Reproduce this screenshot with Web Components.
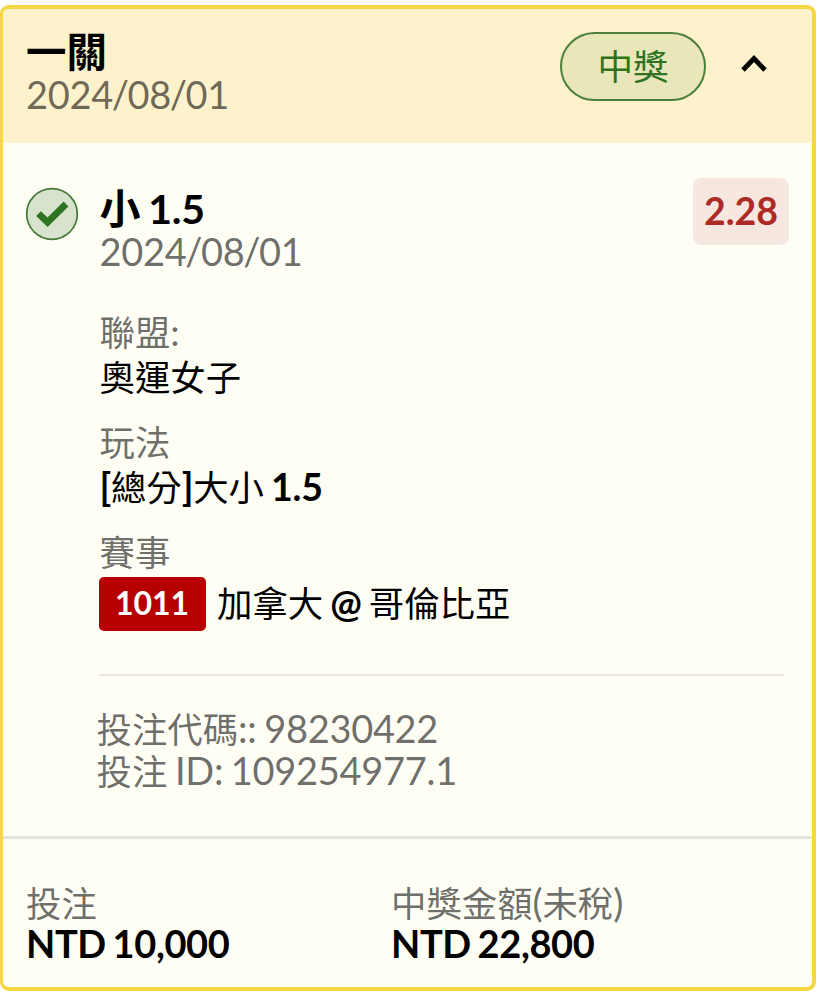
<!DOCTYPE html>
<html lang="zh-Hant">
<head>
<meta charset="utf-8">
<title>投注</title>
<style>
    body {
        margin: 0;
        padding-top: 5px;
        background: #fff;
        font-family: Lato, "Noto Sans CJK TC", sans-serif;
        color: #000;
    }
</style>
</head>
<body>
<bet-card>
    <bet-header slot="header" date="2024/08/01" status="中獎">一關</bet-header>
    <bet-selection date="2024/08/01" odds="2.28">
        <mixed-text slot="title">小 1.5</mixed-text>
        <bet-field label="聯盟:"><mixed-text>奧運女子</mixed-text></bet-field>
        <bet-field label="玩法"><mixed-text strong>[總分]大小 1.5</mixed-text></bet-field>
        <bet-field label="賽事"><match-code>1011</match-code><mixed-text strong>加拿大 @ 哥倫比亞</mixed-text></bet-field>
        <mixed-text slot="meta">投注代碼:: 98230422</mixed-text>
        <mixed-text slot="meta">投注 ID: 109254977.1</mixed-text>
    </bet-selection>
    <bet-amount slot="footer" label="投注">NTD 10,000</bet-amount>
    <bet-amount slot="footer" label="中獎金額(未稅)">NTD 22,800</bet-amount>
</bet-card>

<script>
const MUTED = 'rgba(0, 0, 0, 0.59)';

// Sets Chinese runs a little smaller than the Latin text around them
class MixedText extends HTMLElement {
    constructor() {
        super();
        this.attachShadow({ mode: 'open' });
    }

    connectedCallback() {
        const style = `
            :host { display: block; white-space: pre; word-spacing: -0.045em; }
            .cjk { font-size: var(--cjk-size, 35.4px); line-height: 0; }
            .latin, .slash { letter-spacing: -0.3px; }
            .slash { margin: 0 -1.2px; }
            :host([strong]) .latin { font-weight: 700; }
        `;
        this.shadowRoot.innerHTML = `<style>${style}</style>`;
        const runs = this.textContent.match(/[\u3400-\u9fff]+|\/|[^\u3400-\u9fff/]+/g) || [];
        runs.forEach(run => {
            const span = document.createElement('span');
            span.className = /[\u3400-\u9fff]/.test(run) ? 'cjk' : run === '/' ? 'slash' : 'latin';
            span.textContent = run;
            this.shadowRoot.appendChild(span);
        });
    }
}

class BetCard extends HTMLElement {
    constructor() {
        super();
        this.attachShadow({ mode: 'open' });
        const style = `
            :host {
                display: flex;
                flex-direction: column;
                box-sizing: border-box;
                width: 816px;
                height: 986px;
                border: 4px solid #f5d742;
                border-left-width: 3px;
                border-radius: 9px;
                background: #fffef5;
                overflow: hidden;
            }
            .body { flex: 1; }
            .footer {
                display: grid;
                grid-template-columns: 365px 1fr;
                height: 151px;
                box-sizing: border-box;
                border-top: 3px solid #e4e2dc;
                padding: 43px 23px 0;
            }
        `;
        this.shadowRoot.innerHTML = `
            <style>${style}</style>
            <slot name="header"></slot>
            <div class="body"><slot></slot></div>
            <div class="footer"><slot name="footer"></slot></div>
        `;
    }
}

class BetHeader extends HTMLElement {
    constructor() {
        super();
        this.attachShadow({ mode: 'open' });
    }

    connectedCallback() {
        const style = `
            :host {
                display: flex;
                box-sizing: border-box;
                height: 134px;
                padding: 22px 45px 0 23px;
                background: #fef2cc;
            }
            .text { flex: 1; }
            .title { font-size: 40.5px; line-height: 42px; font-weight: 700; }
            .date { font-size: 38px; line-height: 43px; color: ${MUTED}; }
            .status {
                display: flex;
                align-items: center;
                justify-content: center;
                box-sizing: border-box;
                width: 146px;
                height: 69px;
                margin-top: 1px;
                border: 2px solid #4c7f3a;
                border-radius: 35px;
                background: #e9e6b9;
                color: #2f7222;
                font-size: 35.5px;
                line-height: 40px;
            }
            svg { margin: 23px 0 0 35px; }
        `;
        this.shadowRoot.innerHTML = `
            <style>${style}</style>
            <div class="text">
                <div class="title"><slot></slot></div>
                <mixed-text class="date">${this.getAttribute('date')}</mixed-text>
            </div>
            <div class="status">${this.getAttribute('status')}</div>
            <svg width="26" height="22" viewBox="0 0 26 22" fill="none" stroke="#000" stroke-width="4.8">
                <path d="M2 16 L13 4.5 L24 16"/>
            </svg>
        `;
    }
}

class BetSelection extends HTMLElement {
    constructor() {
        super();
        this.attachShadow({ mode: 'open' });
    }

    connectedCallback() {
        const style = `
            :host { display: flex; padding: 35px 25px 0 22px; }
            .mark { flex: none; margin-top: 9px; }
            .content { flex: 1; padding-left: 20.5px; }
            .top { display: flex; justify-content: space-between; height: 132px; }
            .title { font-size: 41px; line-height: 43px; font-weight: 700; padding-top: 9px; --cjk-size: 41px; }
            .date { font-size: 38px; line-height: 43px; color: ${MUTED}; }
            .odds {
                width: 96px;
                height: 67px;
                border-radius: 8px;
                background: #f7e7e1;
                color: #ad2a25;
                font-size: 37.5px;
                line-height: 66px;
                font-weight: 700;
                text-align: center;
                margin-right: -2px;
            }
            .fields { display: grid; grid-auto-rows: 110px; height: 364px; }
            .meta {
                border-top: 2px solid #e9e4de;
                padding-top: 32px;
                margin: 0 3px 0 -0.5px;
                font-size: 38px;
                line-height: 41.5px;
                color: ${MUTED};
            }
            .meta ::slotted(*) { margin-left: -2.5px; }
        `;
        this.shadowRoot.innerHTML = `
            <style>${style}</style>
            <svg class="mark" width="54" height="54" viewBox="0 0 54 54" fill="none">
                <circle cx="27" cy="27" r="25.3" fill="#d8e3cd" stroke="#447a38" stroke-width="1.7"/>
                <path d="M13.5 26.6 L22.6 35.2 L41 17" stroke="#2f7422" stroke-width="6.8"/>
            </svg>
            <div class="content">
                <div class="top">
                    <div>
                        <div class="title"><slot name="title"></slot></div>
                        <mixed-text class="date">${this.getAttribute('date')}</mixed-text>
                    </div>
                    <div class="odds">${this.getAttribute('odds')}</div>
                </div>
                <div class="fields"><slot></slot></div>
                <div class="meta"><slot name="meta"></slot></div>
            </div>
        `;
    }
}

class BetField extends HTMLElement {
    constructor() {
        super();
        this.attachShadow({ mode: 'open' });
    }

    connectedCallback() {
        const style = `
            :host { display: block; font-size: 37.5px; }
            .label { line-height: 44px; color: ${MUTED}; }
            .value { display: flex; align-items: center; height: 45px; line-height: 45px; }
        `;
        this.shadowRoot.innerHTML = `
            <style>${style}</style>
            <mixed-text class="label">${this.getAttribute('label')}</mixed-text>
            <div class="value"><slot></slot></div>
        `;
    }
}

class MatchCode extends HTMLElement {
    constructor() {
        super();
        this.attachShadow({ mode: 'open' });
        const style = `
            :host {
                display: block;
                flex: none;
                width: 107px;
                height: 54px;
                margin: 14px 11.5px 0 -1px;
                border-radius: 5px;
                background: #b60000;
                color: #fff;
                font-size: 32px;
                line-height: 52px;
                font-weight: 700;
                text-align: center;
            }
        `;
        this.shadowRoot.innerHTML = `<style>${style}</style><slot></slot>`;
    }

    // Keeps the match name level with the code
    connectedCallback() {
        this.nextElementSibling.style.marginTop = '12px';
    }
}

class BetAmount extends HTMLElement {
    constructor() {
        super();
        this.attachShadow({ mode: 'open' });
    }

    connectedCallback() {
        const style = `
            :host { display: block; font-size: 38px; }
            .label { line-height: 41px; color: ${MUTED}; }
            .value { line-height: 41px; font-weight: 700; word-spacing: -2px; letter-spacing: -0.4px; }
        `;
        this.shadowRoot.innerHTML = `
            <style>${style}</style>
            <mixed-text class="label">${this.getAttribute('label')}</mixed-text>
            <div class="value"><slot></slot></div>
        `;
    }
}

customElements.define('mixed-text', MixedText);
customElements.define('bet-card', BetCard);
customElements.define('bet-header', BetHeader);
customElements.define('bet-selection', BetSelection);
customElements.define('bet-field', BetField);
customElements.define('match-code', MatchCode);
customElements.define('bet-amount', BetAmount);
</script>
</body>
</html>
